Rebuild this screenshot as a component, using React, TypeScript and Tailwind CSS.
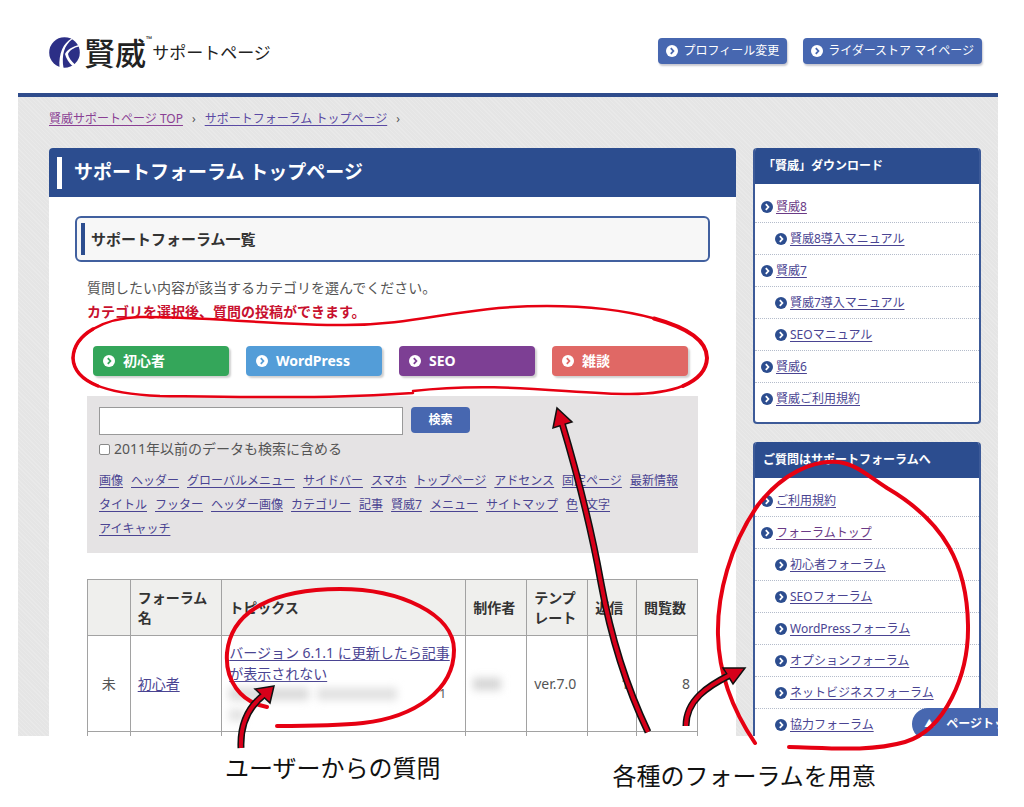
type LinkItem = { label: string; sub?: boolean; visited?: boolean };

const downloads: LinkItem[] = [
  { label: "賢威8", visited: true },
  { label: "賢威8導入マニュアル", sub: true },
  { label: "賢威7" },
  { label: "賢威7導入マニュアル", sub: true },
  { label: "SEOマニュアル", sub: true },
  { label: "賢威6" },
  { label: "賢威ご利用規約" },
];

const forums: LinkItem[] = [
  { label: "ご利用規約" },
  { label: "フォーラムトップ", visited: true },
  { label: "初心者フォーラム", sub: true },
  { label: "SEOフォーラム", sub: true },
  { label: "WordPressフォーラム", sub: true },
  { label: "オプションフォーラム", sub: true },
  { label: "ネットビジネスフォーラム", sub: true },
  { label: "協力フォーラム", sub: true },
];

const categories = [
  { label: "初心者", color: "bg-[#34a65a] [--mark:#34a65a]" },
  { label: "WordPress", color: "bg-[#539dd8] [--mark:#539dd8]" },
  { label: "SEO", color: "bg-[#7d3f94] [--mark:#7d3f94]" },
  { label: "雑談", color: "bg-[#e06865] [--mark:#e06865]" },
];

const tags = [
  "画像", "ヘッダー", "グローバルメニュー", "サイドバー", "スマホ", "トップページ", "アドセンス", "固定ページ", "最新情報",
  "タイトル", "フッター", "ヘッダー画像", "カテゴリー", "記事", "賢威7", "メニュー", "サイトマップ", "色", "文字",
  "アイキャッチ",
];

function Bullet({ className }: { className: string }) {
  return (
    <svg viewBox="0 0 12 12" className={`size-3 shrink-0 ${className}`} aria-hidden="true">
      <circle cx="6" cy="6" r="6" fill="currentColor" />
      <path d="M4.8 3.2 7.4 6 4.8 8.8" fill="none" className="stroke-(--mark)" strokeWidth="1.8" />
    </svg>
  );
}

function Logo() {
  return (
    <a href="#" className="flex items-center text-[#222]">
      <svg viewBox="0 0 31 31" className="size-[31px]" aria-hidden="true">
        <circle cx="15.5" cy="15.5" r="15.3" fill="#2c2f86" />
        <path d="M22.5 1.5C14.5 6 9.5 16 10.5 31L14.5 31C12.5 18 15 8.500 23.5 2Z" fill="#fff" />
        <path d="M29.500 8C23.500 9.500 18 13 16 17C17 21.500 20 26 23.500 29L26 27.500C22.500 24.500 19.500 20.500 19 17C20.500 13.500 25 10.500 30 9.500Z" fill="#fff" />
      </svg>
      <span className="ml-1 text-[31px] leading-9 font-medium">賢威</span>
      <span className="self-start text-[8px] leading-none">™</span>
      <span className="text-[17px]">サポートページ</span>
    </a>
  );
}

function HeaderButton({ label }: { label: string }) {
  return (
    <a href="#" className="flex h-[26px] items-center gap-[5px] rounded bg-[#4767b0] px-2 text-xs text-white shadow-[1px_2px_2px_#c8c8d0] [--mark:#4767b0]">
      <Bullet className="text-white" />
      {label}
    </a>
  );
}

function SideBox({ title, items }: { title: string; items: LinkItem[] }) {
  return (
    <section className="overflow-hidden rounded border-2 border-t-0 border-[#3c5a98] bg-white">
      <h2 className="flex h-9 items-center bg-[#2c4d8f] px-2 text-xs font-bold text-white">{title}</h2>
      <ul className="py-[7px]">
        {items.map(item => (
          <li
            key={item.label}
            className={`flex h-8 items-center gap-[3px] border-b border-dotted border-[#b4bccb] text-xs [--mark:#fff] last:border-b-0 ${
              item.sub ? "pl-5" : "pl-[6px]"
            }`}
          >
            <Bullet className="text-[#2c4d8f]" />
            <a href="#" className={`underline underline-offset-2 ${item.visited ? "text-[#6a3a86]" : "text-[#4a4492]"}`}>
              {item.label}
            </a>
          </li>
        ))}
      </ul>
    </section>
  );
}

function SearchPanel() {
  return (
    <form className="bg-[#e5e3e4] px-3 pt-[11px] pb-3">
      <div className="flex items-start gap-2">
        <input type="text" aria-label="検索キーワード" className="h-7 w-[304px] border border-[#999] bg-white px-2 text-sm" />
        <button type="button" className="h-[26px] w-[59px] rounded bg-[#4767b0] text-xs font-bold text-white">
          検索
        </button>
      </div>
      <label className="mt-1 flex h-5 items-center gap-1 text-sm">
        <input type="checkbox" className="size-[11px] appearance-none rounded-xs border border-[#888] bg-white" />
        2011年以前のデータも検索に含める
      </label>
      <div className="mt-[10px] flex flex-wrap gap-x-2 text-xs leading-6">
        {tags.map(tag => (
          <a key={tag} href="#" className="text-[#4a4492] underline underline-offset-2">{tag}</a>
        ))}
      </div>
    </form>
  );
}

function TopicTable() {
  const cell = "border border-[#a2a2a2] px-[7px]";
  return (
    <table className="w-full table-fixed border-collapse text-left text-sm leading-5">
      <colgroup>
        <col className="w-[7%]" />
        <col className="w-[15%]" />
        <col />
        <col className="w-[10%]" />
        <col className="w-[10%]" />
        <col className="w-[8%]" />
        <col className="w-[10%]" />
      </colgroup>
      <thead>
        <tr className="h-14 bg-[#efefed] text-[#333]">
          <th className={cell}></th>
          <th className={cell}>フォーラム名</th>
          <th className={cell}>トピックス</th>
          <th className={cell}>制作者</th>
          <th className={cell}>テンプレート</th>
          <th className={cell}>返信</th>
          <th className={cell}>閲覧数</th>
        </tr>
      </thead>
      <tbody>
        <tr className="h-24">
          <td className={`${cell} text-center`}>未</td>
          <td className={cell}>
            <a href="#" className="text-[#4a4492] underline underline-offset-2">初心者</a>
          </td>
          <td className={`${cell} leading-[21px]`}>
            <a href="#" className="text-[#4a4492] underline underline-offset-2">
              バージョン 6.1.1 に更新したら記事が表示されない
            </a>
            <div className="flex h-[21px] items-center gap-2 text-xs">
              <span className="h-3 w-20 bg-[#d9d9d9] blur-xs" />
              <span className="h-3 w-20 bg-[#e0e0e0] blur-xs" />
              <span className="ml-auto pr-3">1</span>
            </div>
            <div className="flex h-[21px] items-center">
              <span className="h-3 w-4 bg-[#e2e2e2] blur-xs" />
            </div>
          </td>
          <td className={cell}>
            <div className="h-3 w-7 bg-[#d4d4d4] blur-xs" />
          </td>
          <td className={cell}>ver.7.0</td>
          <td className={`${cell} text-right`}>1</td>
          <td className={`${cell} text-right`}>8</td>
        </tr>
        <tr className="h-24">
          <td className={cell}></td>
          <td className={cell}></td>
          <td className={cell}></td>
          <td className={cell}></td>
          <td className={cell}></td>
          <td className={cell}></td>
          <td className={cell}></td>
        </tr>
      </tbody>
    </table>
  );
}

function Arrow({ shaft, head }: { shaft: string; head: string }) {
  return (
    <g>
      <path d={shaft} fill="none" stroke="#111" strokeWidth="7" />
      <path d={head} fill="#d7001a" stroke="#111" strokeWidth="1.5" />
      <path d={shaft} fill="none" stroke="#d7001a" strokeWidth="4" />
    </g>
  );
}

/* hand-drawn rings and arrows */
function Annotations() {
  return (
    <svg viewBox="0 0 1024 807" className="pointer-events-none absolute top-0 left-0 w-full" aria-hidden="true">
      <g fill="none" stroke="#e60012" strokeLinecap="round">
        <path
          d="M413 393C330 399 240 397 160 396C110 394 74 384 73 358C74 334 104 318 140 317C200 316 270 325 345 325C420 325 460 306 547 306C620 306 707 322 707 358C706 384 670 394 630 394C570 394 500 381 413 391"
          strokeWidth="2.500"
        />
        <path d="M98 386C83 380 73.500 371 73 358C73.500 346 81 336 93 329" strokeWidth="3.500" />
        <path d="M654 318.500C685 327 707 340 707 358C706.500 371 697 380 683 386" strokeWidth="4" />
        <path d="M267 707C240 702 225 680 227 653C231 610 275 589 340 589C400 589 454 614 454 650C454 690 415 717 363 723C335 726 305 726 277 726" strokeWidth="4" />
        <path
          d="M755 743C738 718 719 680 718 635C717 595 730 545 758 505C782 474 812 460 838 462C856 464 868 476 887 488C945 522 967 565 968 625C969 675 945 730 905 742C870 752 830 748 789 747"
          strokeWidth="4"
        />
      </g>
      <Arrow shaft="M648 732Q616 665 601 583Q588 510 562 423" head="M557 408L553 428L572 422Z" />
      <Arrow shaft="M241 748C240 724 249 706 265 694" head="M274 686L255 689L270 703Z" />
      <Arrow shaft="M686 726C686 700 708 686 730 675" head="M745 668L723 668L733 684Z" />
    </svg>
  );
}

export default function App() {
  return (
    <div className="relative bg-white pb-3 font-['Noto_Sans','Noto_Sans_CJK_JP',sans-serif] text-[#555]" lang="ja">
      <div className="relative mr-[26px] ml-[18px] max-h-[736px] overflow-hidden">
        <header className="flex h-[93px] items-center justify-between pr-4 pl-[31px]">
          <div className="pt-6 pb-3">
            <Logo />
          </div>
          <nav className="flex gap-4 pt-3 pb-1">
            <HeaderButton label="プロフィール変更" />
            <HeaderButton label="ライダーストア マイページ" />
          </nav>
        </header>

        <div className="border-t-4 border-[#2f4c8c] bg-[#e5e5e5] bg-[repeating-linear-gradient(45deg,#e9e9e9_0_1px,transparent_1px_3px)] pt-3 pr-[17px] pl-[31px]">
          <nav className="flex h-5 items-center gap-[9px] text-xs" aria-label="パンくず">
            <a href="#" className="text-[#8a3f94] underline underline-offset-2">賢威サポートページ TOP</a>
            <span>›</span>
            <a href="#" className="text-[#5a4aa4] underline underline-offset-2">サポートフォーラム トップページ</a>
            <span>›</span>
          </nav>

          <div className="mt-[19px] flex items-start gap-[17px]">
            <main className="min-w-0 flex-1 rounded-t bg-white">
              <h1 className="flex h-[49px] items-center gap-3 rounded-t bg-[#2c4d8f] pl-2 text-[19px] font-bold text-white">
                <span className="h-8 w-[5px] bg-white" />
                サポートフォーラム トップページ
              </h1>
              <div className="px-[26px] pt-[19px]">
                <h2 className="flex h-[46px] items-center gap-[6px] rounded-md border-2 border-[#41609f] bg-[#f7f7f7] pl-1 text-[15px] font-bold text-[#333]">
                  <span className="h-8 w-1 bg-[#2c4d8f]" />
                  サポートフォーラム一覧
                </h2>
                <div className="px-3 pt-[14px]">
                  <p className="text-sm leading-6">質問したい内容が該当するカテゴリを選んでください。</p>
                  <p className="text-sm leading-6 font-bold text-[#c8102e]">カテゴリを選択後、質問の投稿ができます。</p>
                  <div className="mt-[22px] mb-5 grid grid-cols-4 gap-[17px] pr-[10px] pl-[6px]">
                    {categories.map(c => (
                      <a
                        key={c.label}
                        href="#"
                        className={`flex h-[30px] items-center gap-2 rounded pl-[10px] text-sm font-bold text-white shadow-[2px_2px_2px_#d0d0d0] ${c.color}`}
                      >
                        <Bullet className="text-white" />
                        {c.label}
                      </a>
                    ))}
                  </div>
                  <SearchPanel />
                  <div className="mt-[26px]">
                    <TopicTable />
                  </div>
                </div>
              </div>
            </main>

            <aside className="flex w-[228px] shrink-0 flex-col gap-[18px]">
              <SideBox title="「賢威」ダウンロード" items={downloads} />
              <SideBox title="ご質問はサポートフォーラムへ" items={forums} />
            </aside>
          </div>
        </div>

        <button
          type="button"
          className="absolute -right-7 -bottom-1 flex h-8 items-center gap-3 rounded-l-full bg-[#4767b0] pr-2 pl-3 text-xs font-bold whitespace-nowrap text-white"
        >
          <span className="text-[10px]">▲</span>
          ページトップ
        </button>
      </div>

      <div className="flex items-start gap-[172px] pl-[225px] text-2xl text-[#111]">
        <p className="pt-4">ユーザーからの質問</p>
        <p className="pt-6">各種のフォーラムを用意</p>
      </div>

      <Annotations />
    </div>
  );
}
